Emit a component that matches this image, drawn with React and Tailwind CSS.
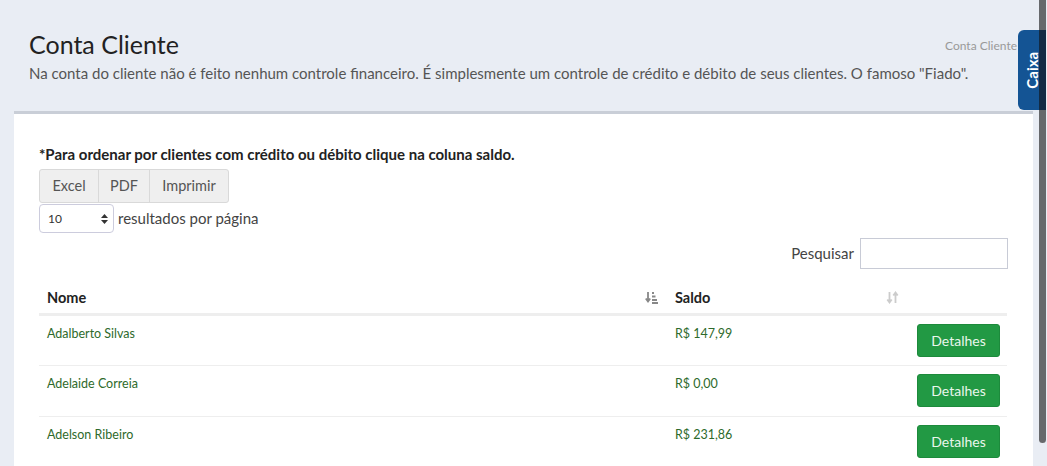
import React from "react";

const rows = [
  { nome: "Adalberto Silvas", saldo: "R$ 147,99" },
  { nome: "Adelaide Correia", saldo: "R$ 0,00" },
  { nome: "Adelson Ribeiro", saldo: "R$ 231,86" },
];

function SortDownIcon() {
  return (
    <svg width="13" height="13" viewBox="0 0 13 13" className="text-[#888]">
      <path d="M3 1v9M0.8 7.5L3 10.5L5.2 7.5" stroke="currentColor" strokeWidth="1.8" fill="none" />
      <rect x="7" y="1" width="2" height="2" fill="currentColor" />
      <rect x="7" y="4.5" width="3.5" height="2" fill="currentColor" />
      <rect x="7" y="8" width="5" height="2" fill="currentColor" />
      <rect x="7" y="11" width="6" height="2" fill="currentColor" />
    </svg>
  );
}

function SortBothIcon() {
  return (
    <svg width="13" height="13" viewBox="0 0 13 13" className="text-[#ccc]">
      <path d="M3.5 1v10M1.3 8.5L3.5 11.5L5.7 8.5" stroke="currentColor" strokeWidth="1.8" fill="none" />
      <path d="M9.5 12V2M7.3 4.5L9.5 1.5L11.7 4.5" stroke="currentColor" strokeWidth="1.8" fill="none" />
    </svg>
  );
}

export default function App() {
  return (
    <div className="relative h-[466px] w-[1047px] overflow-hidden bg-[#e9edf4] font-['Lato',sans-serif]">
      <div className="flex h-full flex-col pr-[14px] pl-[14px]">
        <div className="pt-[29px] pl-[15px] pr-[16px]">
          <div className="flex items-center justify-between">
            <h1 className="text-[25px] leading-[30px] text-[#222]">Conta Cliente</h1>
            <div className="mt-[4px] whitespace-nowrap text-[12px] text-[#999]">Conta Cliente</div>
          </div>
          <p className="mt-[4px] whitespace-nowrap text-[15px] leading-[20px] text-[#555]">
            Na conta do cliente não é feito nenhum controle financeiro. É simplesmente um controle de crédito e débito de seus clientes. O famoso "Fiado".
          </p>
        </div>
        <div className="mt-[28px] flex-1 border-t-[3px] border-[#c9ced7] bg-white px-[25px] pt-[30px]">
          <p className="text-[15px] font-bold leading-[20px] text-[#222]">
            *Para ordenar por clientes com crédito ou débito clique na coluna saldo.
          </p>
          <div className="mt-[5px] flex h-[34px] w-fit rounded-[3px] border border-[#d9d9d9] bg-[#efefef] text-[14.5px] text-[#555]">
            <div className="flex w-[58px] items-center justify-center">Excel</div>
            <div className="flex w-[51px] items-center justify-center border-l border-[#d9d9d9]">PDF</div>
            <div className="flex w-[79px] items-center justify-center border-l border-[#d9d9d9]">Imprimir</div>
          </div>
          <div className="mt-[1px] flex items-center gap-[4px]">
            <div className="flex h-[29px] w-[75px] items-center justify-between rounded-[4px] border border-[#ccd] pl-[8px] pr-[5px] text-[12px] text-[#333]">
              <span>10</span>
              <svg width="7" height="10" viewBox="0 0 7 10"><path d="M3.5 0L7 4H0z M0 6h7L3.5 10z" fill="#333" /></svg>
            </div>
            <span className="text-[15px] text-[#444]">resultados por página</span>
          </div>
          <div className="mt-[5px] flex items-center justify-end gap-[6px]">
            <span className="text-[15px] text-[#444]">Pesquisar</span>
            <div className="h-[31px] w-[148px] border border-[#c8cbd6]"></div>
          </div>
          <table className="mt-[14px] w-[968px] border-collapse">
            <thead>
              <tr className="border-b-[3px] border-[#eee]">
                <th className="h-[31px] w-[628px] px-[8px] text-left text-[14.5px] font-bold text-[#222]">
                  <div className="flex items-center justify-between pr-[1px]">
                    <span>Nome</span>
                    <SortDownIcon />
                  </div>
                </th>
                <th className="w-[240px] px-[8px] text-left text-[14.5px] font-bold text-[#222]">
                  <div className="flex items-center justify-between pr-[0px]">
                    <span>Saldo</span>
                    <SortBothIcon />
                  </div>
                </th>
                <th></th>
              </tr>
            </thead>
            <tbody>
              {rows.map((r) => (
                <tr key={r.nome} className="border-b border-[#eee]">
                  <td className="h-[51px] px-[8px] pt-[9px] align-top text-[12.5px] text-[#2e6a2b]">{r.nome}</td>
                  <td className="px-[8px] pt-[9px] align-top text-[12.5px] text-[#2e6a2b]">{r.saldo}</td>
                  <td className="pr-[7px] text-right align-middle">
                    <button className="h-[33px] w-[83px] rounded-[3px] border border-[#1d8a3c] bg-[#229944] text-[14px] text-[#eaf6ec]">
                      Detalhes
                    </button>
                  </td>
                </tr>
              ))}
            </tbody>
          </table>
        </div>
      </div>
      <div className="absolute right-[1px] top-[30px] flex h-[80px] w-[28px] items-center justify-center rounded-l-[6px] bg-[#145494]">
        <span className="-rotate-90 text-[15px] font-bold text-white">Caixa</span>
      </div>
      <div className="absolute right-[1px] top-0 h-[443px] w-[7px] rounded-b-[4px] bg-[#111]/60"></div>
    </div>
  );
}
